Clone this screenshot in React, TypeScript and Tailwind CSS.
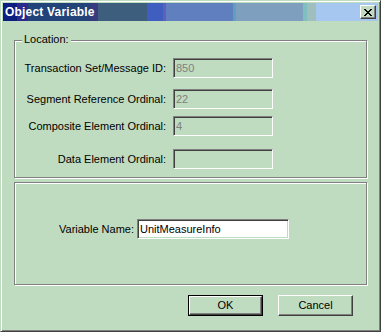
import React from "react";

const sunken =
  "border border-t-[#808080] border-l-[#808080] border-b-white border-r-white shadow-[inset_1px_1px_0_#404040,inset_-1px_-1px_0_#c0dcc0]";
const etched =
  "border border-[#808080] shadow-[inset_1px_1px_0_#ffffff,1px_1px_0_#ffffff]";

function CloseGlyph() {
  const rows = ["11000011", "01100110", "00111100", "00011000", "00111100", "01100110", "11000011"];
  return (
    <svg width="8" height="7" viewBox="0 0 8 7" shapeRendering="crispEdges">
      {rows.map((r, y) =>
        r.split("").map((c, x) => (c === "1" ? <rect key={`${x}-${y}`} x={x} y={y} width="1" height="1" fill="#000" /> : null))
      )}
    </svg>
  );
}

function Field({ label, value, mt }: { label: string; value: string; mt: string }) {
  return (
    <div className={`flex items-center ${mt}`}>
      <div className="w-[152px] text-right pr-[1px]">{label}</div>
      <div className={`ml-[6px] w-[100px] h-[20px] ${sunken} flex items-center pl-[2px] text-[#808080]`}>{value}</div>
    </div>
  );
}

function Button({ children, isDefault }: { children: React.ReactNode; isDefault?: boolean }) {
  if (isDefault) {
    return (
      <div className="w-[75px] h-[21px] border border-black">
        <div className="w-full h-full border border-t-white border-l-white border-b-[#404040] border-r-[#404040] shadow-[inset_-1px_-1px_0_#808080] flex items-center justify-center">
          {children}
        </div>
      </div>
    );
  }
  return (
    <div className="w-[75px] h-[21px] border border-t-white border-l-white border-b-[#404040] border-r-[#404040] shadow-[inset_-1px_-1px_0_#808080] flex items-center justify-center">
      {children}
    </div>
  );
}

export default function App() {
  return (
    <div className="w-[381px] h-[332px] bg-[#c0dcc0] border border-t-[#c0dcc0] border-l-[#c0dcc0] border-b-[#404040] border-r-[#404040] shadow-[inset_1px_1px_0_#ffffff,inset_-1px_-1px_0_#808080] p-[2px] font-['Liberation_Sans',Arial,sans-serif] text-[11px] text-black leading-none">
      <div className="h-[18px] flex items-center justify-between pl-[2px] pr-[2px] bg-[linear-gradient(to_right,#0c1f80_0px,#0c1f80_14px,#2a2a8c_14px,#2a2a8c_25px,#22437a_25px,#22437a_87px,#383a80_87px,#383a80_95px,#3e5e7e_95px,#3e5e7e_144px,#3f5ebf_144px,#3f5ebf_160px,#5f5fbf_160px,#5f5fbf_163px,#5f7fbe_163px,#5f7fbe_230px,#5fa0bf_230px,#5fa0bf_233px,#7f9fbf_233px,#7f9fbf_300px,#7fbfbf_300px,#7fbfbf_304px,#9fbfbf_304px,#9fbfbf_313px,#a6c8f0_313px,#a6c8f0_100%)]">
        <span className="text-white font-bold text-[12px] tracking-[0.2px]">Object Variable</span>
        <div className="w-[16px] h-[14px] bg-[#c0dcc0] border border-t-white border-l-white border-b-[#404040] border-r-[#404040] shadow-[inset_-1px_-1px_0_#808080] flex items-center justify-center">
          <CloseGlyph />
        </div>
      </div>

      <div className="ml-[11px] w-[353px]">
        <div className={`relative mt-[19px] h-[138px] ${etched}`}>
          <span className="absolute -top-[7px] left-[7px] bg-[#c0dcc0] px-[2px]">Location:</span>
          <Field label="Transaction Set/Message ID:" value="850" mt="mt-[17px]" />
          <Field label="Segment Reference Ordinal:" value="22" mt="mt-[11px]" />
          <Field label="Composite Element Ordinal:" value="4" mt="mt-[7px]" />
          <Field label="Data Element Ordinal:" value="" mt="mt-[13px]" />
        </div>

        <div className={`mt-[4px] h-[103px] ${etched}`}>
          <div className="flex items-center mt-[36px]">
            <div className="w-[119px] text-right">Variable Name:</div>
            <div className={`ml-[3px] w-[152px] h-[20px] bg-white ${sunken} flex items-center pl-[2px]`}>UnitMeasureInfo</div>
          </div>
        </div>

        <div className="flex justify-end gap-[15px] pr-[14px] mt-[10px]">
          <Button isDefault>OK</Button>
          <Button>Cancel</Button>
        </div>
      </div>
    </div>
  );
}
